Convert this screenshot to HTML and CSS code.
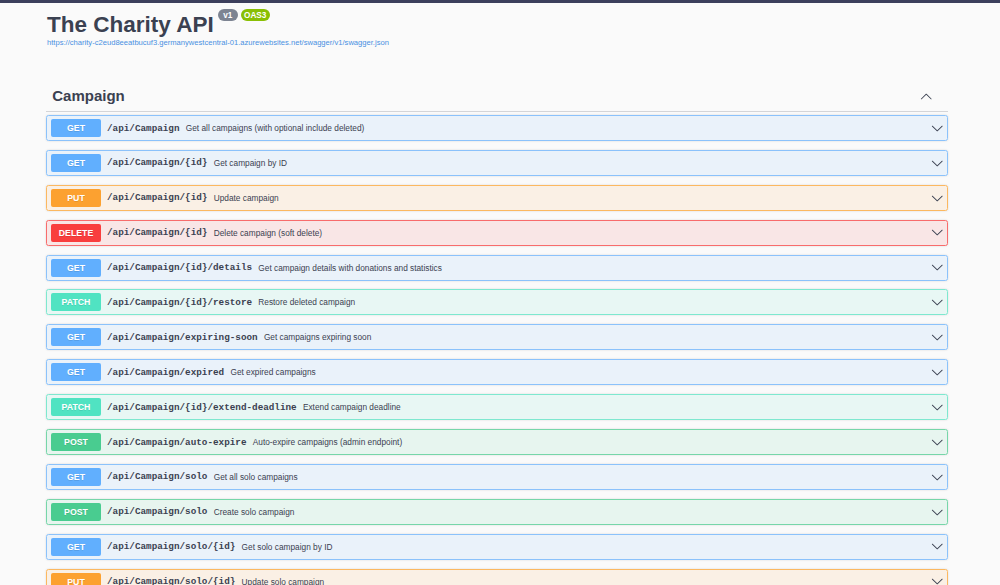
FILE: index.html
```html
<!DOCTYPE html>
<html lang="en">
<head>
<meta charset="utf-8">
<title>The Charity API</title>
<link rel="stylesheet" href="styles.css">
</head>
<body>
<div class="topbar"></div>
<div class="wrapper">
  <div class="info">
    <div class="title-row">
      <h2 class="title">The Charity API</h2>
      <span class="badge badge-version">v1</span>
      <span class="badge badge-oas">OAS3</span>
    </div>
    <a class="spec-link" href="#">https://charity-c2eud8eeatbucuf3.germanywestcentral-01.azurewebsites.net/swagger/v1/swagger.json</a>
  </div>

  <div class="tag">
    <h3 class="tag-heading">
      <span class="tag-name">Campaign</span>
      <svg class="tag-arrow" viewBox="0 0 20 20"><path d="M17.418 14.908c.272.268.709.268.979 0s.271-.701 0-.969l-7.908-7.83c-.27-.268-.707-.268-.979 0l-7.908 7.83c-.27.268-.27.701 0 .969.271.268.709.268.979 0L10 7.767l7.418 7.141z"/></svg>
    </h3>

    <div class="opblock get"><span class="method">GET</span><span class="path">/api/Campaign</span><span class="desc">Get all campaigns (with optional include deleted)</span><svg class="arrow" viewBox="0 0 20 20"><path d="M17.418 6.109c.272-.268.709-.268.979 0s.271.701 0 .969l-7.908 7.83c-.27.268-.707.268-.979 0l-7.908-7.83c-.27-.268-.27-.701 0-.969.271-.268.709-.268.979 0L10 13.25l7.418-7.141z"/></svg></div>
    <div class="opblock get"><span class="method">GET</span><span class="path">/api/Campaign/{id}</span><span class="desc">Get campaign by ID</span><svg class="arrow" viewBox="0 0 20 20"><path d="M17.418 6.109c.272-.268.709-.268.979 0s.271.701 0 .969l-7.908 7.83c-.27.268-.707.268-.979 0l-7.908-7.83c-.27-.268-.27-.701 0-.969.271-.268.709-.268.979 0L10 13.25l7.418-7.141z"/></svg></div>
    <div class="opblock put"><span class="method">PUT</span><span class="path">/api/Campaign/{id}</span><span class="desc">Update campaign</span><svg class="arrow" viewBox="0 0 20 20"><path d="M17.418 6.109c.272-.268.709-.268.979 0s.271.701 0 .969l-7.908 7.83c-.27.268-.707.268-.979 0l-7.908-7.83c-.27-.268-.27-.701 0-.969.271-.268.709-.268.979 0L10 13.25l7.418-7.141z"/></svg></div>
    <div class="opblock delete"><span class="method">DELETE</span><span class="path">/api/Campaign/{id}</span><span class="desc">Delete campaign (soft delete)</span><svg class="arrow" viewBox="0 0 20 20"><path d="M17.418 6.109c.272-.268.709-.268.979 0s.271.701 0 .969l-7.908 7.83c-.27.268-.707.268-.979 0l-7.908-7.83c-.27-.268-.27-.701 0-.969.271-.268.709-.268.979 0L10 13.25l7.418-7.141z"/></svg></div>
    <div class="opblock get"><span class="method">GET</span><span class="path">/api/Campaign/{id}/details</span><span class="desc">Get campaign details with donations and statistics</span><svg class="arrow" viewBox="0 0 20 20"><path d="M17.418 6.109c.272-.268.709-.268.979 0s.271.701 0 .969l-7.908 7.83c-.27.268-.707.268-.979 0l-7.908-7.83c-.27-.268-.27-.701 0-.969.271-.268.709-.268.979 0L10 13.25l7.418-7.141z"/></svg></div>
    <div class="opblock patch"><span class="method">PATCH</span><span class="path">/api/Campaign/{id}/restore</span><span class="desc">Restore deleted campaign</span><svg class="arrow" viewBox="0 0 20 20"><path d="M17.418 6.109c.272-.268.709-.268.979 0s.271.701 0 .969l-7.908 7.83c-.27.268-.707.268-.979 0l-7.908-7.83c-.27-.268-.27-.701 0-.969.271-.268.709-.268.979 0L10 13.25l7.418-7.141z"/></svg></div>
    <div class="opblock get"><span class="method">GET</span><span class="path">/api/Campaign/expiring-soon</span><span class="desc">Get campaigns expiring soon</span><svg class="arrow" viewBox="0 0 20 20"><path d="M17.418 6.109c.272-.268.709-.268.979 0s.271.701 0 .969l-7.908 7.83c-.27.268-.707.268-.979 0l-7.908-7.83c-.27-.268-.27-.701 0-.969.271-.268.709-.268.979 0L10 13.25l7.418-7.141z"/></svg></div>
    <div class="opblock get"><span class="method">GET</span><span class="path">/api/Campaign/expired</span><span class="desc">Get expired campaigns</span><svg class="arrow" viewBox="0 0 20 20"><path d="M17.418 6.109c.272-.268.709-.268.979 0s.271.701 0 .969l-7.908 7.83c-.27.268-.707.268-.979 0l-7.908-7.83c-.27-.268-.27-.701 0-.969.271-.268.709-.268.979 0L10 13.25l7.418-7.141z"/></svg></div>
    <div class="opblock patch"><span class="method">PATCH</span><span class="path">/api/Campaign/{id}/extend-deadline</span><span class="desc">Extend campaign deadline</span><svg class="arrow" viewBox="0 0 20 20"><path d="M17.418 6.109c.272-.268.709-.268.979 0s.271.701 0 .969l-7.908 7.83c-.27.268-.707.268-.979 0l-7.908-7.83c-.27-.268-.27-.701 0-.969.271-.268.709-.268.979 0L10 13.25l7.418-7.141z"/></svg></div>
    <div class="opblock post"><span class="method">POST</span><span class="path">/api/Campaign/auto-expire</span><span class="desc">Auto-expire campaigns (admin endpoint)</span><svg class="arrow" viewBox="0 0 20 20"><path d="M17.418 6.109c.272-.268.709-.268.979 0s.271.701 0 .969l-7.908 7.83c-.27.268-.707.268-.979 0l-7.908-7.83c-.27-.268-.27-.701 0-.969.271-.268.709-.268.979 0L10 13.25l7.418-7.141z"/></svg></div>
    <div class="opblock get"><span class="method">GET</span><span class="path">/api/Campaign/solo</span><span class="desc">Get all solo campaigns</span><svg class="arrow" viewBox="0 0 20 20"><path d="M17.418 6.109c.272-.268.709-.268.979 0s.271.701 0 .969l-7.908 7.83c-.27.268-.707.268-.979 0l-7.908-7.83c-.27-.268-.27-.701 0-.969.271-.268.709-.268.979 0L10 13.25l7.418-7.141z"/></svg></div>
    <div class="opblock post"><span class="method">POST</span><span class="path">/api/Campaign/solo</span><span class="desc">Create solo campaign</span><svg class="arrow" viewBox="0 0 20 20"><path d="M17.418 6.109c.272-.268.709-.268.979 0s.271.701 0 .969l-7.908 7.83c-.27.268-.707.268-.979 0l-7.908-7.83c-.27-.268-.27-.701 0-.969.271-.268.709-.268.979 0L10 13.25l7.418-7.141z"/></svg></div>
    <div class="opblock get"><span class="method">GET</span><span class="path">/api/Campaign/solo/{id}</span><span class="desc">Get solo campaign by ID</span><svg class="arrow" viewBox="0 0 20 20"><path d="M17.418 6.109c.272-.268.709-.268.979 0s.271.701 0 .969l-7.908 7.83c-.27.268-.707.268-.979 0l-7.908-7.83c-.27-.268-.27-.701 0-.969.271-.268.709-.268.979 0L10 13.25l7.418-7.141z"/></svg></div>
    <div class="opblock put"><span class="method">PUT</span><span class="path">/api/Campaign/solo/{id}</span><span class="desc">Update solo campaign</span><svg class="arrow" viewBox="0 0 20 20"><path d="M17.418 6.109c.272-.268.709-.268.979 0s.271.701 0 .969l-7.908 7.83c-.27.268-.707.268-.979 0l-7.908-7.83c-.27-.268-.27-.701 0-.969.271-.268.709-.268.979 0L10 13.25l7.418-7.141z"/></svg></div>
  </div>
</div>
</body>
</html>
```

FILE: styles.css
```css
* { box-sizing: border-box; }

html, body {
  margin: 0;
  padding: 0;
  background: #fafafa;
  font-family: "Liberation Sans", Arial, sans-serif;
  color: #3b4151;
}

.topbar {
  height: 3px;
  background: #3c3f5c;
}

.wrapper {
  width: 902px;
  margin-left: 46px;
}

.info {
  padding-top: 8px;
}

.title-row {
  display: flex;
  align-items: flex-start;
  padding-left: 1px;
}

.title {
  margin: 0;
  font-size: 22.5px;
  line-height: 27px;
  font-weight: 700;
  color: #3b4151;
}

.badge {
  display: inline-flex;
  align-items: center;
  justify-content: center;
  height: 12px;
  margin-top: -2px;
  padding: 0 3px;
  border-radius: 8px;
  font-size: 8.2px;
  font-weight: 700;
  color: #fff;
}

.badge-version {
  background: #7d8492;
  margin-left: 4px;
  min-width: 20px;
}

.badge-oas {
  background: #89bf04;
  margin-left: 3px;
  min-width: 29px;
}

.spec-link {
  display: block;
  padding-left: 1px;
  font-size: 7.6px;
  line-height: 10px;
  color: #4990e2;
  text-decoration: none;
}

.tag {
  margin-top: 30.5px;
}

.tag-heading {
  display: flex;
  align-items: center;
  justify-content: space-between;
  margin: 0 0 3px;
  padding: 7.25px 16px 5.25px 6.25px;
  border-bottom: 1px solid rgba(59, 65, 81, 0.2);
  font-size: 15px;
  line-height: 20px;
  font-weight: 700;
}

.tag-arrow {
  width: 12.5px;
  height: 12.5px;
  fill: #3b4151;
}

.opblock {
  display: flex;
  align-items: center;
  height: 26px;
  margin-bottom: 8.9px;
  padding: 0 3px 0 4px;
  border: 1px solid;
  border-radius: 2.5px;
  box-shadow: 0 0 2px rgba(0, 0, 0, 0.15);
}

.method {
  flex: none;
  width: 50px;
  height: 18px;
  line-height: 18px;
  text-align: center;
  border-radius: 2px;
  font-size: 8.75px;
  font-weight: 700;
  color: #fff;
  text-shadow: 0 1px 0 rgba(0, 0, 0, 0.1);
}

.path {
  padding: 0 6.25px 0 6px;
  font-family: "Liberation Mono", "DejaVu Sans Mono", monospace;
  font-weight: 700;
  font-size: 9.3px;
  color: #3b4151;
}

.desc {
  flex: 1;
  font-size: 8.3px;
  color: #3b4151;
}

.arrow {
  flex: none;
  width: 12.5px;
  height: 12.5px;
  margin-right: 1px;
  fill: #3b4151;
}

.get { background: rgba(97, 175, 254, 0.1); border-color: #8bc2fb; }
.get .method { background: #61affe; }

.put { background: rgba(252, 161, 48, 0.1); border-color: #fcb860; }
.put .method { background: #fca130; }

.delete { background: rgba(249, 62, 62, 0.1); border-color: #f86c6c; }
.delete .method { background: #f93e3e; }

.patch { background: rgba(80, 227, 194, 0.1); border-color: #7ee8cf; }
.patch .method { background: #50e3c2; }

.post { background: rgba(73, 204, 144, 0.1); border-color: #76d6a9; }
.post .method { background: #49cc90; }
```
